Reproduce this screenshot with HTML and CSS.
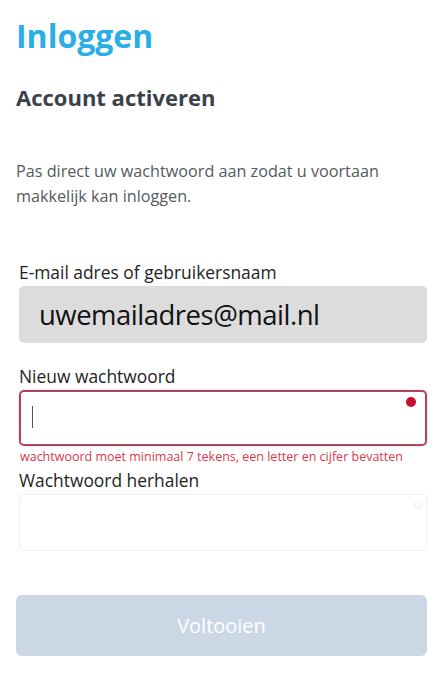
FILE: index.html
```html
<!DOCTYPE html>
<html lang="nl">
<head>
<meta charset="utf-8">
<title>Inloggen</title>
<link rel="stylesheet" href="styles.css">
</head>
<body>
<main class="page">
  <h1 class="title">Inloggen</h1>
  <h2 class="subtitle">Account activeren</h2>
  <p class="intro">Pas direct uw wachtwoord aan zodat u voortaan makkelijk kan inloggen.</p>
  <form class="form">
    <div class="field field-email">
      <label class="label">E-mail adres of gebruikersnaam</label>
      <div class="input input-disabled">uwemailadres@mail.nl</div>
    </div>
    <div class="field field-new">
      <label class="label">Nieuw wachtwoord</label>
      <div class="input input-error"><span class="caret"></span><span class="dot dot-red"></span></div>
      <div class="error">wachtwoord moet minimaal 7 tekens, een letter en cijfer bevatten</div>
    </div>
    <div class="field field-repeat">
      <label class="label">Wachtwoord herhalen</label>
      <div class="input input-empty"><span class="dot dot-faint"></span></div>
    </div>
    <div class="button">Voltooien</div>
  </form>
</main>
</body>
</html>
```
FILE: styles.css
```css
* { box-sizing: border-box; }
html, body { margin: 0; padding: 0; background: #fff; }
body { font-family: "Open Sans", "Liberation Sans", sans-serif; }
.page { padding: 14px 20px 0 16px; }
.title { margin: 0; font-size: 32px; line-height: 44px; font-weight: 700; color: #29aee6; }
.subtitle { margin: 24px 0 0; font-size: 22px; line-height: 30px; font-weight: 700; color: #3b414b; }
.intro { margin: 47px 0 0; font-size: 16.2px; line-height: 25px; color: #555a60; }
.form { margin-top: 51px; display: flex; flex-direction: column; }
.field { padding-left: 3px; display: flex; flex-direction: column; }
.label { font-size: 17.4px; line-height: 24px; color: #1e1e1e; margin-bottom: 2px; }
.input { position: relative; height: 57px; border-radius: 5px; width: 408px; }
.input-disabled { background: #dcdcdd; font-size: 27.5px; letter-spacing: -0.5px; line-height: 57px; padding-left: 20px; color: #111; }
.field-new { margin-top: 21px; }
.input-error { border: 2px solid #a8475d; height: 56px; box-shadow: 0 0 2px rgba(168,71,93,0.4); }
.caret { position: absolute; left: 11px; top: 14px; width: 1px; height: 22px; background: #555; }
.dot { position: absolute; border-radius: 50%; }
.dot-red { right: 9px; top: 5px; width: 10px; height: 10px; background: #c8102e; }
.error { font-size: 12.5px; line-height: 18px; color: #d8394c; margin-top: 2px; padding-left: 1px; }
.field-repeat { margin-top: 2px; }
.input-empty { border: 1px solid #efefef; }
.dot-faint { right: 4px; top: 6px; width: 8px; height: 8px; border: 1px solid #ececec; }
.button { margin-top: 44px; width: 411px; height: 61px; border-radius: 6px; background: #ccd7e6; color: #fff; font-size: 20px; line-height: 61px; text-align: center; }
```
